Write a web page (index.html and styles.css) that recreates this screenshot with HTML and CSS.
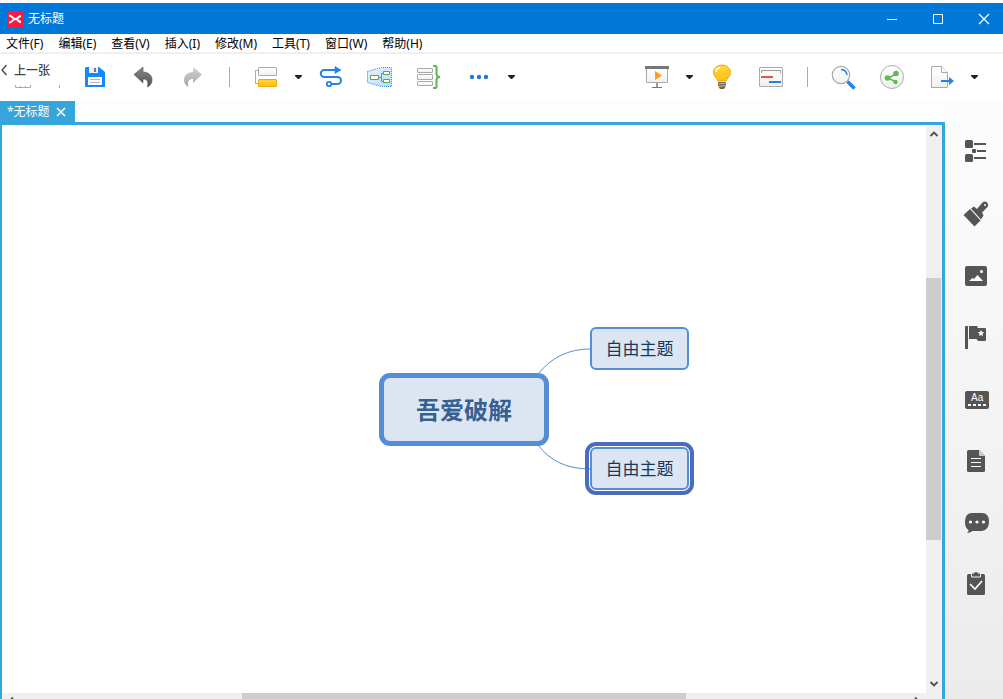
FILE: index.html
```
<!DOCTYPE html>
<html lang="zh-CN">
<head>
<meta charset="utf-8">
<title>无标题</title>
<link rel="stylesheet" href="styles.css">
</head>
<body>
<header class="titlebar">
  <svg class="logo" width="16" height="16" viewBox="0 0 16 16" aria-hidden="true">
    <rect width="16" height="16" fill="#ff1744"/>
    <path d="M2 4.500C5.500 4.500 5.500 8 8.500 8S11 5 14 5M2 11.500C5.500 11.500 5.500 8 8.500 8S11 11 14 11" fill="none" stroke="#fff" stroke-width="2"/>
  </svg>
  <h1 class="title">无标题</h1>
  <div class="window-controls">
    <button class="win-btn" aria-label="最小化"><svg width="12" height="12" viewBox="0 0 12 12"><path d="M1 6.500h10" stroke="#fff"/></svg></button>
    <button class="win-btn" aria-label="最大化"><svg width="12" height="12" viewBox="0 0 12 12"><path d="M1.500 1.500h9v9h-9z" fill="none" stroke="#fff"/></svg></button>
    <button class="win-btn" aria-label="关闭"><svg width="12" height="12" viewBox="0 0 12 12"><path d="M1 1l10 10M11 1L1 11" stroke="#fff" stroke-width="1.200"/></svg></button>
  </div>
</header>

<nav class="menubar">
  <button>文件(F)</button>
  <button>编辑(E)</button>
  <button>查看(V)</button>
  <button>插入(I)</button>
  <button>修改(M)</button>
  <button>工具(T)</button>
  <button>窗口(W)</button>
  <button>帮助(H)</button>
</nav>

<div class="toolbar">
  <svg width="0" height="0" class="defs" aria-hidden="true">
    <defs>
      <linearGradient id="paper" x2="0" y2="1"><stop stop-color="#fff"/><stop offset="1" stop-color="#f0f0f0"/></linearGradient>
      <linearGradient id="gold" x2="0" y2="1"><stop stop-color="#ffd83d"/><stop offset="1" stop-color="#fdc010"/></linearGradient>
      <linearGradient id="dark" x2="0" y2="1"><stop stop-color="#8a8a8a"/><stop offset="1" stop-color="#505050"/></linearGradient>
      <linearGradient id="pale" x2="0" y2="1"><stop stop-color="#d2d2d2"/><stop offset="1" stop-color="#a8a8a8"/></linearGradient>
      <linearGradient id="sky" x2="1" y2="1"><stop stop-color="#e6f2fe"/><stop offset="1" stop-color="#bcdcfa"/></linearGradient>
    </defs>
  </svg>
  <button class="previous">
    <svg class="chevron" width="6" height="12" viewBox="0 0 6 12"><path d="M5.500 1L1 6l4.500 5" fill="none" stroke="#444" stroke-width="1.300"/></svg>
    <span>上一张</span>
    <svg class="remnant" width="48" height="4" viewBox="0 0 48 4"><path d="M.5 0v2.500h15V0M5.500 1v2M10.500 1v2" fill="none" stroke="#aaa"/><path d="M44.500 0v3" stroke="#aaa"/></svg>
  </button>
  <button class="tool" aria-label="保存"><svg width="32" height="32" viewBox="0 0 32 32">
    <path d="M7 6h13l6 5v14.500l-.5.500h-19l-.5-.5V7z" fill="#1588fb"/><path d="M10 6h9v6h-9z" fill="#eef1f5"/><path d="M15 7h2v4h-2z" fill="#777"/><path d="M9 16h14v8H9z" fill="#fff"/><path d="M11 18.500h10M11 21.500h10" stroke="#b4b4b4"/></svg></button>
  <button class="tool" aria-label="撤销"><svg width="32" height="32" viewBox="0 0 32 32">
    <path d="M7 13.500L16 6v5c6 .3 9 3.500 9 8 0 3-1.500 5.500-4.500 7 1.300-5.500-.5-8-4.500-8v4z" fill="url(#dark)" stroke="#505050" stroke-width=".6"/></svg></button>
  <button class="tool" aria-label="重做"><svg width="32" height="32" viewBox="0 0 32 32">
    <path d="M27 13.500L18 6v5c-6 .3-9 3.500-9 8 0 3 1.500 5.500 4.500 7-1.300-5.500.5-8 4.500-8v4z" fill="url(#pale)"/></svg></button>
  <span class="separator"></span>
  <button class="tool" aria-label="主题"><svg width="32" height="32" viewBox="0 0 32 32">
    <path d="M7 9.500H4.500v13H7" fill="none" stroke="#aaa"/><rect x="7.500" y="6.500" width="18" height="8" rx=".5" fill="url(#paper)" stroke="#aaa"/><rect x="7.500" y="18.500" width="18" height="7" rx=".5" fill="url(#gold)" stroke="#f0a80c"/></svg></button>
  <button class="caret" aria-label="主题选项"><svg width="16" height="8" viewBox="0 0 16 8"><path d="M4 2h7v1L8 6H7L4 3z" fill="#222"/></svg></button>
  <button class="tool" aria-label="联系"><svg width="32" height="32" viewBox="0 0 32 32">
    <path d="M21 9H9.300a3.200 3.200 0 0 0 0 7h13.200a3.400 3.400 0 0 1 0 7H16" fill="none" stroke="#1f83ea" stroke-width="2"/><path d="M20 5.500l6 3.500-6 3.500z" fill="#1f83ea" stroke="#1f83ea" stroke-width=".6"/><circle cx="14" cy="23" r="2.200" fill="#fff" stroke="#1f83ea" stroke-width="1.800"/></svg></button>
  <button class="tool" aria-label="外框"><svg width="32" height="32" viewBox="0 0 32 32">
    <path d="M4.500 10.500l14-4h10v19h-10l-14-4z" fill="url(#sky)" stroke="#2b86da" stroke-dasharray="1 1"/><path d="M7.500 14.500h8v4h-8zM20.500 10.500h6v3h-6zM20.500 18.500h6v3h-6z" fill="#fff" stroke="#58a845"/><path d="M16 16.500h2.500M20 12.500h-1.500v8H20" fill="none" stroke="#58a845"/></svg></button>
  <button class="tool" aria-label="概要"><svg width="32" height="32" viewBox="0 0 32 32">
    <g fill="url(#paper)" stroke="#aaa"><rect x="6.500" y="7.500" width="15" height="4" rx=".5"/><rect x="6.500" y="13.500" width="15" height="5" rx=".5"/><rect x="6.500" y="20.500" width="15" height="4" rx=".5"/></g><path d="M22 5h2.500q1 0 1 1v7q0 3 3.500 3-3.500 0-3.500 3v7q0 1-1 1H22" fill="none" stroke="#62b454" stroke-width="2"/></svg></button>
  <button class="tool tool-more" aria-label="更多"><svg width="32" height="32" viewBox="0 0 32 32">
    <g fill="#1f78df"><circle cx="11" cy="16" r="2.200"/><circle cx="18" cy="16" r="2.200"/><circle cx="25" cy="16" r="2.200"/></g></svg></button>
  <button class="caret" aria-label="更多选项"><svg width="16" height="8" viewBox="0 0 16 8"><path d="M5 2h7v1L9 6H8L5 3z" fill="#222"/></svg></button>

  <div class="toolbar-end">
    <button class="tool" aria-label="演示"><svg width="33" height="32" viewBox="0 0 33 32">
      <path d="M6.500 8v13.500h21V8" fill="url(#paper)" stroke="#aaa"/><path d="M5 5h24v3H5z" fill="#777"/><path d="M15 10l7 4.500-7 4.500z" fill="#f9a11b"/><path d="M17 22v4" stroke="#777" stroke-width="1.500"/><path d="M12 26.500h10" stroke="#777"/></svg></button>
    <button class="caret" aria-label="演示选项"><svg width="16" height="8" viewBox="0 0 16 8"><path d="M5 2h7v1L9 6H8L5 3z" fill="#222"/></svg></button>
    <button class="tool" aria-label="头脑风暴"><svg width="33" height="32" viewBox="0 0 33 32">
      <path d="M13 20c0-2-4.500-4-4.500-8.500a8.500 7.500 0 0 1 17 0c0 4.500-4.500 6.500-4.500 8.500z" fill="url(#gold)" stroke="#e8a80d"/><path d="M11 11c0-2.500 1.500-4 4-4.500" fill="none" stroke="#fff" stroke-width="1.500"/><path d="M13 21h8v4l-2 3h-4l-2-3z" fill="#666"/><path d="M13 23l8-1M13 25.500l8-1" stroke="#e5c56a"/></svg></button>
    <button class="tool" aria-label="甘特图"><svg width="33" height="32" viewBox="0 0 33 32">
      <rect x="5.500" y="6.500" width="23" height="19" rx=".5" fill="url(#paper)" stroke="#aaa"/><path d="M7.500 12V9.500h19V12" fill="none" stroke="#999"/><path d="M7 16h12" stroke="#e95050" stroke-width="2"/><path d="M15 21h12" stroke="#1f83ea" stroke-width="2"/></svg></button>
    <span class="separator"></span>
    <button class="tool" aria-label="搜索"><svg width="33" height="32" viewBox="0 0 33 32">
      <path d="M20.500 20.500l7 7" stroke="#1f83ea" stroke-width="3.500"/><circle cx="14" cy="14" r="8.700" fill="url(#paper)" stroke="#a8a8a8" stroke-width="1.200"/><path d="M14 8.500q5.500.5 6 5.500" fill="none" stroke="#1f83ea" stroke-width="1.500"/></svg></button>
    <button class="tool" aria-label="分享"><svg width="33" height="32" viewBox="0 0 33 32">
      <circle cx="16" cy="16" r="11.500" fill="url(#paper)" stroke="#aaa"/><path d="M20 13l-8 4 8 4" fill="none" stroke="#62bb50" stroke-width="1.500"/><g fill="#62bb50"><circle cx="20" cy="12.500" r="2.800"/><circle cx="11.500" cy="17" r="2.800"/><circle cx="19.500" cy="21" r="2.200"/></g></svg></button>
    <button class="tool" aria-label="导出"><svg width="33" height="32" viewBox="0 0 33 32">
      <path d="M6.500 5.500h10l6 6v15h-16z" fill="url(#paper)" stroke="#aaa"/><path d="M16.500 5.500v6h6" fill="#fff" stroke="#aaa"/><path d="M16 20h9" stroke="#1f83ea" stroke-width="2"/><path d="M24 16l5 4-5 4z" fill="#1f83ea"/></svg></button>
    <button class="caret" aria-label="导出选项"><svg width="16" height="8" viewBox="0 0 16 8"><path d="M5 2h7v1L9 6H8L5 3z" fill="#222"/></svg></button>
  </div>
</div>

<div class="body">
  <main class="workspace">
    <div class="tabs">
      <div class="tab">
        <span>*无标题</span>
        <button class="tab-close" aria-label="关闭标签"><svg width="10" height="10" viewBox="0 0 10 10"><path d="M1 1l8 8M9 1L1 9" stroke="#fff" stroke-width="1.600"/></svg></button>
      </div>
    </div>
    <div class="editor">
      <div class="editor-row">
        <div class="canvas">
          <svg class="links" width="924" height="568" viewBox="0 0 924 568" aria-hidden="true"><path d="M536 249q20-25 52-25M536 320q18 24 52 24" fill="none" stroke="#558ed5"/></svg>
          <div class="node central">吾爱破解</div>
          <div class="node topic topic-first">自由主题</div>
          <div class="node topic topic-second selected">自由主题</div>
        </div>
        <div class="vscroll">
          <svg width="16" height="17" viewBox="0 0 16 17"><path d="M4.500 11L8 7.500l3.500 3.500" fill="none" stroke="#505050" stroke-width="1.800"/></svg>
          <div class="vthumb"></div>
          <svg width="16" height="17" viewBox="0 0 16 17"><path d="M4.500 6L8 9.500 11.500 6" fill="none" stroke="#505050" stroke-width="1.800"/></svg>
        </div>
      </div>
      <div class="hscroll">
        <svg width="17" height="16" viewBox="0 0 17 16"><path d="M11 4.500L7.500 8l3.500 3.500" fill="none" stroke="#505050" stroke-width="1.800"/></svg>
        <div class="hthumb"></div>
        <svg width="17" height="16" viewBox="0 0 17 16"><path d="M6 4.500L9.500 8 6 11.500" fill="none" stroke="#505050" stroke-width="1.800"/></svg>
      </div>
    </div>
  </main>
  <aside class="sidebar">
    <button aria-label="大纲"><svg width="32" height="32" viewBox="0 0 32 32"><g fill="#555"><rect x="5" y="5" width="8" height="8" rx="1.500"/><rect x="5" y="19" width="8" height="8" rx="1.500"/><rect x="12" y="14" width="4" height="4" rx="1"/><path d="M14 8h12v2H14zM17 15h9v2h-9zM14 22h12v2H14z"/></g></svg></button>
    <button aria-label="格式"><svg width="32" height="32" viewBox="0 0 32 32"><path d="M3.500 18l6.500-6L20.500 23.500l-6 6z" fill="#555"/><path d="M11 11.500l3-2 3 2.500 5-6q3-2.500 5-.5t.5 4.500L22 15.500l1.500 3-2.500 4z" fill="#555"/><circle cx="25" cy="8" r="1" fill="#fff"/></svg></button>
    <button aria-label="图片"><svg width="32" height="32" viewBox="0 0 32 32"><rect x="5" y="7" width="22" height="20" rx="2" fill="#555"/><path d="M9 22l3.500-3 1.500 1 3.500-4 5.500 6z" fill="#fff"/><circle cx="21.500" cy="12.500" r="1.500" fill="#fff"/></svg></button>
    <button aria-label="图标"><svg width="32" height="32" viewBox="0 0 32 32"><rect x="5" y="5" width="3" height="23" rx=".5" fill="#555"/><path d="M9 5h8.500v2H25q1 0 1 1v11q0 1-1 1h-6q-2 0-2.500-2H9z" fill="#555"/><path d="M21 9l1 2.100 2.200.2-1.700 1.500.5 2.300-2-1.200-2 1.200.5-2.300-1.700-1.500 2.200-.2z" fill="#fff"/></svg></button>
    <button aria-label="标签"><svg width="32" height="32" viewBox="0 0 32 32"><rect x="5" y="8" width="24" height="18" rx="2" fill="#555"/><text class="label-glyph" x="11" y="18">Aa</text><path d="M8 22h18" stroke="#fff" stroke-width="2" stroke-dasharray="3 2"/></svg></button>
    <button aria-label="备注"><svg width="32" height="32" viewBox="0 0 32 32"><path d="M8.500 5H19l6 6v14.500q0 1.500-1.500 1.500h-15Q7 27 7 25.500v-19Q7 5 8.500 5z" fill="#555"/><path d="M19 5l6 6h-5q-1 0-1-1z" fill="#ccc"/><path d="M11 13.500h10M11 17.500h10M11 21.500h10" stroke="#fff"/></svg></button>
    <button aria-label="批注"><svg width="32" height="32" viewBox="0 0 32 32"><path d="M12 6h10q7 0 7 8.500T22 24H12.500Q10 26 7 26q2-1.500 1.500-3Q5 21 5 15q0-9 7-9z" fill="#555"/><g fill="#fff"><circle cx="10.500" cy="15" r="1.600"/><circle cx="17" cy="15" r="1.600"/><circle cx="23.500" cy="15" r="1.600"/></g></svg></button>
    <button aria-label="任务"><svg width="32" height="32" viewBox="0 0 32 32"><rect x="7" y="5" width="18" height="21" rx="1.500" fill="#555"/><path d="M11.500 5v3h9V5" fill="none" stroke="#f0f0f0"/><path d="M12 7V4.500h2Q14 3 16 3t2 1.500h2V7z" fill="#555"/><path d="M10 15l5 5 7-8" fill="none" stroke="#fff" stroke-width="1.600"/></svg></button>
  </aside>
</div>
</body>
</html>
```
FILE: styles.css
```
* {
  box-sizing: border-box;
}

body {
  margin: 0;
  height: 100vh;
  padding-top: 3px;
  display: flex;
  flex-direction: column;
  overflow: hidden;
  background: #fff;
  color: #000;
  font-family: "Noto Sans", "Noto Sans CJK SC", sans-serif;
  font-size: 12px;
  line-height: 18px;
}

button {
  margin: 0;
  padding: 0;
  border: 0;
  background: none;
  color: inherit;
  font: inherit;
}

svg {
  display: block;
  flex: none;
}

.titlebar {
  flex: none;
  height: 31px;
  padding-left: 7px;
  display: flex;
  align-items: center;
  gap: 5px;
  background: #0078d7;
  color: #fff;
}

.title {
  margin: 0;
  font-size: 12px;
  font-weight: 400;
}

.window-controls {
  margin: 0 -4px 0 auto;
  align-self: stretch;
  display: flex;
}

.win-btn {
  width: 46px;
  display: flex;
  align-items: center;
  justify-content: center;
}

.menubar {
  flex: none;
  height: 20px;
  padding: 1px 0 0 6px;
  display: flex;
  align-items: flex-start;
  gap: 15px;
  border-bottom: 2px solid #f0f0f0;
}

.toolbar {
  flex: none;
  height: 46px;
  margin-bottom: 1px;
  display: flex;
  align-items: center;
}

.defs {
  position: absolute;
}

.previous {
  position: relative;
  width: 71px;
  height: 46px;
  padding: 8px 0 0 1px;
  display: flex;
  align-items: flex-start;
  gap: 7px;
  color: #444;
  font-weight: 500;
}

.chevron {
  margin-top: 2px;
}

.remnant {
  position: absolute;
  left: 15px;
  bottom: 11px;
}

.tool {
  width: 48px;
  height: 32px;
  display: flex;
  justify-content: center;
}

.tool-more {
  width: 52px;
}

.caret {
  width: 16px;
  height: 8px;
}

.separator {
  width: 28px;
  height: 20px;
  display: flex;
  justify-content: center;
}

.separator::before {
  content: "";
  width: 1px;
  background: #aaa;
}

.toolbar-end {
  margin-left: auto;
  padding-right: 21px;
  display: flex;
  align-items: center;
}

.toolbar-end .tool {
  width: 49px;
}

.toolbar-end .separator {
  width: 24px;
}

.body {
  flex: 1;
  min-height: 0;
  display: flex;
  background: linear-gradient(#fdfdfd, #ebebeb);
}

.workspace {
  flex: 1;
  min-width: 0;
  display: flex;
  flex-direction: column;
}

.tabs {
  display: flex;
  background: #fdfdfd;
}

.tab {
  height: 21px;
  padding: 1px 9px 0 7px;
  display: flex;
  align-items: center;
  gap: 6px;
  background: #35a5dc;
  color: #fff;
}

.editor {
  flex: 1;
  min-height: 0;
  display: flex;
  flex-direction: column;
  overflow: hidden;
  border: solid #35a5dc;
  border-width: 3px 3px 0 2px;
  background: #f0f0f0;
}

.editor-row {
  flex: 1;
  min-height: 0;
  display: flex;
}

.canvas {
  position: relative;
  flex: 1;
  overflow: hidden;
  background: #fff;
}

.links {
  position: absolute;
  left: 0;
  top: 0;
}

.node {
  position: absolute;
  display: flex;
  align-items: center;
  justify-content: center;
  border: 2px solid #558ed5;
  background: #dce6f2;
}

.central {
  left: 377px;
  top: 248px;
  width: 170px;
  height: 73px;
  border-width: 5px;
  border-radius: 11px;
  color: #376092;
  font-size: 24px;
  font-weight: 700;
}

.topic {
  left: 588px;
  width: 99px;
  height: 43px;
  border-radius: 6px;
  color: #17375e;
  font-size: 17px;
}

.topic-first {
  top: 202px;
}

.topic-second {
  top: 322px;
}

.selected {
  outline: 4px solid #4a6cbd;
  outline-offset: 1px;
}

.vscroll {
  width: 16px;
  display: flex;
  flex-direction: column;
  justify-content: space-between;
}

.vthumb {
  width: 15px;
  height: 46%;
  flex: none;
  background: #cdcdcd;
}

.hscroll {
  flex: none;
  height: 17px;
  margin: 0 16px -11px 0;
  display: flex;
  justify-content: space-between;
}

.hthumb {
  width: 48%;
  background: #cdcdcd;
}

.sidebar {
  flex: none;
  width: 58px;
  padding: 19px 0 0 4px;
}

.sidebar button {
  width: 100%;
  height: 62px;
  display: flex;
  align-items: center;
  justify-content: center;
}

.label-glyph {
  fill: #fff;
  font-family: "Liberation Sans", sans-serif;
  font-size: 10px;
}
```
